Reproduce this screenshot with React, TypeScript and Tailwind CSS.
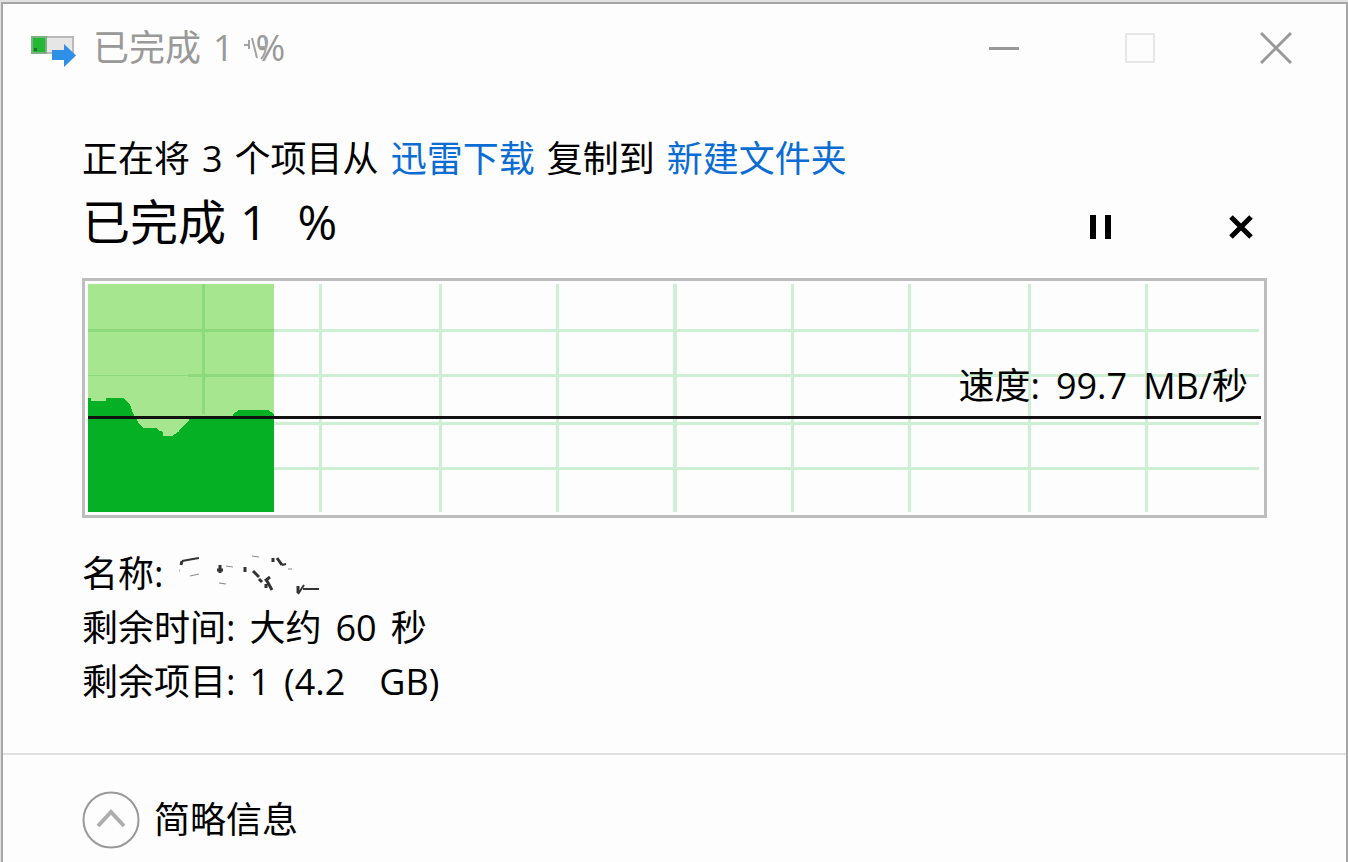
import { ComponentPropsWithoutRef } from "react"
import clsx from "clsx"

const GRID_X = [232, 352, 469, 586, 703, 820, 940, 1057]
const GRID_Y = [46, 91, 139, 184]

function CopyIcon() {
  return (
    <svg width="46" height="32" viewBox="0 0 46 32" aria-hidden="true">
      <rect x="1" y="1" width="41" height="16" fill="#e6e6e6" stroke="#b9b9b9" strokeWidth="2" />
      <rect x="1" y="1" width="14" height="16" fill="#22b833" stroke="#7fae84" strokeWidth="2" />
      <rect x="3" y="12" width="3" height="3" fill="#187a20" />
      <path d="M21 14h12V8l12 11.500L33 31v-7H21z" fill="#2f8fe6" />
    </svg>
  )
}

function CaptionButton({ className, ...props }: ComponentPropsWithoutRef<"button">) {
  return (
    <button
      type="button"
      className={clsx("flex h-full w-[136px] items-center justify-center", className)}
      {...props}
    />
  )
}

function TitleBar() {
  return (
    <header className="flex h-[88px] items-center pr-0.5 pl-7">
      <div className="pt-2">
        <CopyIcon />
      </div>
      <div className="ml-4 flex gap-3 text-4xl leading-[54px] whitespace-nowrap text-[#999]">
        <span>已完成</span>
        <span>1</span>
        <span className="relative ml-2.5">
          %
          {/* leftover digit strokes in front of the percent sign */}
          <svg
            className="absolute top-3 -left-3"
            width="26"
            height="30"
            viewBox="0 0 26 30"
            fill="none"
            stroke="#a3a3a3"
            strokeWidth="2"
            aria-hidden="true"
          >
            <path d="M0 12h4M5 7v9M8 5l5 20M20 3c3 5 3 17-3 23M15 14h7" />
          </svg>
        </span>
      </div>
      <div className="ml-auto flex h-full">
        <CaptionButton aria-label="最小化" className="text-[#999]">
          <svg width="32" height="32" viewBox="0 0 32 32" aria-hidden="true">
            <path d="M1 16.500h30" stroke="currentColor" strokeWidth="3" />
          </svg>
        </CaptionButton>
        <CaptionButton aria-label="最大化" disabled className="text-[#e6e6e6]">
          <svg width="32" height="32" viewBox="0 0 32 32" fill="none" aria-hidden="true">
            <rect x="2" y="2" width="28" height="28" stroke="currentColor" strokeWidth="2" />
          </svg>
        </CaptionButton>
        <CaptionButton aria-label="关闭" className="text-[#999]">
          <svg width="32" height="32" viewBox="0 0 32 32" aria-hidden="true">
            <path d="M1 1l30 30M31 1L1 31" stroke="currentColor" strokeWidth="3" />
          </svg>
        </CaptionButton>
      </div>
    </header>
  )
}

function SpeedChart() {
  return (
    <div className="relative mt-5 border-[3px] border-[#bdbdbd] p-[3px]">
      <svg
        className="block h-[228px] w-full"
        viewBox="0 0 1172 228"
        preserveAspectRatio="none"
        shapeRendering="crispEdges"
        role="img"
        aria-label="传输速度"
      >
        <g fill="#cdf0d4">
          {GRID_Y.map((y) => (
            <rect key={y} x="186" y={y - 1} width="984" height="3" />
          ))}
          {GRID_X.map((x) => (
            <rect key={x} x={x - 1} y="0" width="3" height="228" />
          ))}
        </g>

        {/* copied part */}
        <rect width="186" height="228" fill="#a5e68f" />
        <g fill="#8cda7b">
          <rect x="114" y="0" width="3" height="130" />
          <rect x="0" y="45" width="186" height="3" />
          <rect x="0" y="91" width="186" height="1" />
          <rect x="100" y="90" width="86" height="3" />
        </g>
        <path
          d="M0 114h3v3h15v-3h17l7 7 2 6 6 11 5 6h13l2 2 5 2v4h9l6-4 11-12 1-2h42l1-4 6-4h29l6 4v98H0z"
          fill="#06b025"
        />

        {/* current speed */}
        <rect x="0" y="132" width="1172" height="3" fill="#111" />
      </svg>
      <div className="absolute top-[78px] right-4 flex gap-4 text-4xl leading-[54px] whitespace-nowrap">
        <span>速度:</span>
        <span>99.7</span>
        <span>MB/秒</span>
      </div>
    </div>
  )
}

function Details() {
  return (
    <dl className="mt-[29px] text-4xl leading-[54px]">
      <div className="flex items-center gap-4">
        <dt>名称:</dt>
        <dd>
          {/* mostly erased file name */}
          <svg width="144" height="42" viewBox="0 0 144 42" fill="none" stroke="#333" aria-hidden="true">
            <path d="M2 12l1-4M38 17h6M41 12v8M66 14v5M74 18l6 6M80 26l3 3M86 28l5-4M87 31v4M88 28l5 9M94 5v4M98 5l5 7M119 33v7" strokeWidth="3" />
            <path d="M3 8l11-2 6-1M103 12l4-1M119 41l6-9M124 36h16" strokeWidth="2" />
            <path d="M11 23l9-2M0 16v3M47 13l7 1M40 30l7 1M73 3l7 1M109 16h4" strokeWidth="1" stroke="#888" />
          </svg>
        </dd>
      </div>
      <div className="flex gap-3.5">
        <dt>剩余时间:</dt>
        <dd className="flex gap-3.5">
          <span>大约</span>
          <span>60</span>
          <span>秒</span>
        </dd>
      </div>
      <div className="flex gap-3.5">
        <dt>剩余项目:</dt>
        <dd className="flex gap-3.5">
          <span>1</span>
          <span>(4.2</span>
          <span className="ml-5">GB)</span>
        </dd>
      </div>
    </dl>
  )
}

export default function App() {
  return (
    <div className="flex min-h-screen flex-col bg-[#e2e2e2] pt-0.5 pl-px font-['Open_Sans','Noto_Sans_CJK_SC',sans-serif] text-black">
      <div className="flex flex-1 flex-col border-x-2 border-t-2 border-[#a6a6a6] bg-[#fdfdfd]">
        <TitleBar />

        <main className="px-[79px] pt-10 pb-11">
          <p className="flex gap-3 text-4xl leading-[54px] whitespace-nowrap">
            <span>正在将</span>
            <span>3</span>
            <span>个项目从</span>
            <a href="#source" className="text-[#0b6cd4]">迅雷下载</a>
            <span>复制到</span>
            <a href="#target" className="text-[#0b6cd4]">新建文件夹</a>
          </p>

          <div className="flex items-center">
            <h1 className="flex gap-3.5 text-5xl leading-[72px]">
              <span>已完成</span>
              <span>1</span>
              <span className="ml-4">%</span>
            </h1>
            <div className="ml-auto flex gap-[88px] pt-2.5">
              <button type="button" aria-label="暂停" className="flex h-12 w-[52px] items-center justify-center">
                <svg width="24" height="26" viewBox="0 0 24 26" aria-hidden="true">
                  <path d="M1 1h6v24H1zM16 1h6v24h-6z" />
                </svg>
              </button>
              <button type="button" aria-label="取消" className="flex h-12 w-[52px] items-center justify-center">
                <svg width="26" height="26" viewBox="0 0 26 26" aria-hidden="true">
                  <path d="M3 3l20 20M23 3L3 23" stroke="#000" strokeWidth="5" />
                </svg>
              </button>
            </div>
          </div>

          <SpeedChart />
          <Details />
        </main>

        <footer className="border-t-2 border-[#e0e0e0] px-[79px] pt-9">
          <button type="button" className="flex items-center gap-3.5 text-4xl leading-[54px]">
            <svg width="58" height="58" viewBox="0 0 58 58" fill="none" aria-hidden="true">
              <circle cx="29" cy="29" r="27.500" stroke="#999" strokeWidth="2" />
              <path d="M16 35l13-14 13 14" stroke="#adadad" strokeWidth="4" />
            </svg>
            简略信息
          </button>
        </footer>
      </div>
    </div>
  )
}
